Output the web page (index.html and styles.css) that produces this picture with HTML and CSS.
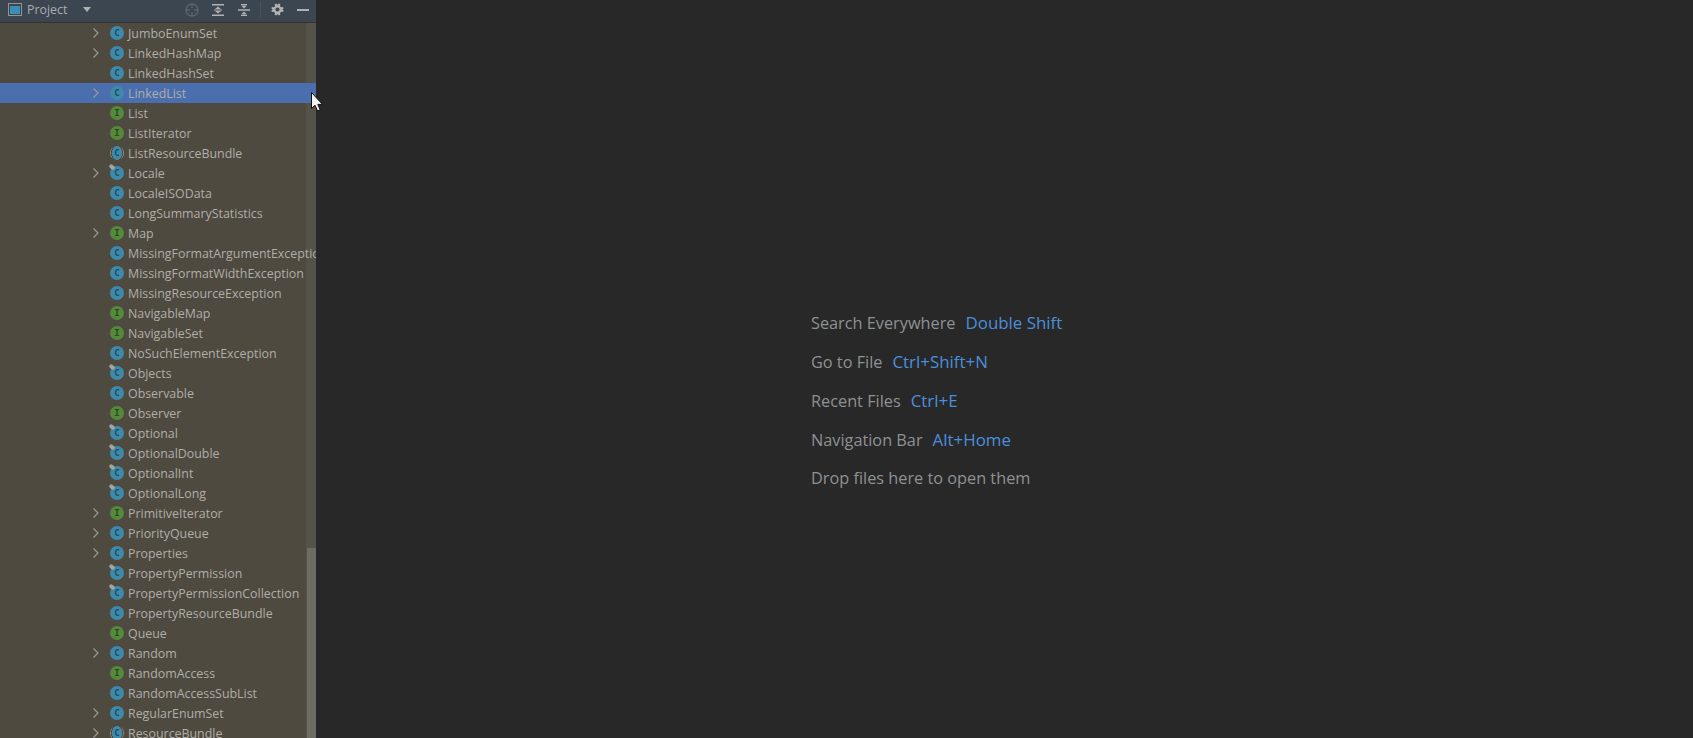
FILE: index.html
```html
<!DOCTYPE html>
<html lang="en">
<head>
<meta charset="utf-8">
<title>Project</title>
<link rel="stylesheet" href="styles.css">
</head>
<body>
<svg class="defs" width="0" height="0" aria-hidden="true">
  <symbol id="chev" viewBox="0 0 12 12"><path d="M3.5 1.5 L8 6 L3.5 10.5" fill="none" stroke="#9a9a96" stroke-width="1.2"/></symbol>
</svg>
<div class="app">
  <aside class="panel">
    <header class="bar">
      <svg class="win" width="14" height="13" viewBox="0 0 14 13"><rect x="0.5" y="0.5" width="13" height="12" fill="none" stroke="#8e9499"/><rect x="2" y="3" width="10" height="8" fill="#3b8fb5"/></svg>
      <span class="title">Project</span>
      <svg class="caret" width="8" height="5" viewBox="0 0 8 5"><path d="M0 0 H8 L4 5 Z" fill="#afb1b3"/></svg>
      <span class="grow"></span>
      <svg class="tool t1" width="14" height="14" viewBox="0 0 14 14"><circle cx="7" cy="7" r="6" fill="none" stroke="#5a6269" stroke-width="1.5"/><path d="M7 0.5 V5 M7 9 V13.5 M0.5 7 H5 M9 7 H13.5" stroke="#5a6269" stroke-width="1.5"/></svg>
      <svg class="tool t2" width="12" height="12" viewBox="0 0 12 12"><path d="M0 0.75 H12 M0 11.25 H12" stroke="#afb1b3" stroke-width="1.5"/><path d="M6 2.5 L9 5 H3 Z M6 9.5 L9 7 H3 Z" fill="#afb1b3"/><path d="M2 6 H10" stroke="#afb1b3"/></svg>
      <svg class="tool t3" width="12" height="12" viewBox="0 0 12 12"><path d="M0 6 H12" stroke="#afb1b3" stroke-width="1.5"/><path d="M6 4.5 L3 1.5 H9 Z M6 7.5 L3 10.5 H9 Z" fill="#afb1b3"/><path d="M3 0.5 H9 M3 11.5 H9" stroke="#afb1b3"/></svg>
      <i class="sep"></i>
      <svg class="tool t4" width="13" height="13" viewBox="0 0 14 14"><path d="M7 2 L8.6 0.6 L10 1.4 L9.7 3.4 L11 4.7 L13 4.4 L13.6 6 L12.2 7 L13.6 8.2 L13 9.7 L11 9.4 L9.7 10.7 L10 12.7 L8.6 13.4 L7 12 L5.4 13.4 L4 12.7 L4.3 10.7 L3 9.4 L1 9.7 L0.4 8.2 L1.8 7 L0.4 6 L1 4.4 L3 4.7 L4.3 3.4 L4 1.4 L5.4 0.6 Z M7 4.8 A2.2 2.2 0 1 0 7 9.2 A2.2 2.2 0 1 0 7 4.8 Z" fill="#afb1b3" fill-rule="evenodd"/></svg>
      <svg class="tool t5" width="12" height="2" viewBox="0 0 12 2"><rect width="12" height="2" fill="#afb1b3"/></svg>
    </header>
    <div class="tree">
      <div class="track"><div class="thumb"></div></div>
      <ul class="rows">
        <li class="row"><svg class="chev"><use href="#chev"/></svg><span class="ico c">C</span><span class="name">JumboEnumSet</span></li>
        <li class="row"><svg class="chev"><use href="#chev"/></svg><span class="ico c">C</span><span class="name">LinkedHashMap</span></li>
        <li class="row"><span class="ico c nochev">C</span><span class="name">LinkedHashSet</span></li>
        <li class="row sel"><svg class="chev"><use href="#chev"/></svg><span class="ico c">C</span><span class="name">LinkedList</span></li>
        <li class="row"><span class="ico i nochev">I</span><span class="name">List</span></li>
        <li class="row"><span class="ico i nochev">I</span><span class="name">ListIterator</span></li>
        <li class="row"><span class="ico c abs nochev">C</span><span class="name">ListResourceBundle</span></li>
        <li class="row"><svg class="chev"><use href="#chev"/></svg><span class="ico c fin">C</span><span class="name">Locale</span></li>
        <li class="row"><span class="ico c nochev">C</span><span class="name">LocaleISOData</span></li>
        <li class="row"><span class="ico c nochev">C</span><span class="name">LongSummaryStatistics</span></li>
        <li class="row"><svg class="chev"><use href="#chev"/></svg><span class="ico i">I</span><span class="name">Map</span></li>
        <li class="row"><span class="ico c nochev">C</span><span class="name">MissingFormatArgumentException</span></li>
        <li class="row"><span class="ico c nochev">C</span><span class="name">MissingFormatWidthException</span></li>
        <li class="row"><span class="ico c nochev">C</span><span class="name">MissingResourceException</span></li>
        <li class="row"><span class="ico i nochev">I</span><span class="name">NavigableMap</span></li>
        <li class="row"><span class="ico i nochev">I</span><span class="name">NavigableSet</span></li>
        <li class="row"><span class="ico c nochev">C</span><span class="name">NoSuchElementException</span></li>
        <li class="row"><span class="ico c fin nochev">C</span><span class="name">Objects</span></li>
        <li class="row"><span class="ico c nochev">C</span><span class="name">Observable</span></li>
        <li class="row"><span class="ico i nochev">I</span><span class="name">Observer</span></li>
        <li class="row"><span class="ico c fin nochev">C</span><span class="name">Optional</span></li>
        <li class="row"><span class="ico c fin nochev">C</span><span class="name">OptionalDouble</span></li>
        <li class="row"><span class="ico c fin nochev">C</span><span class="name">OptionalInt</span></li>
        <li class="row"><span class="ico c fin nochev">C</span><span class="name">OptionalLong</span></li>
        <li class="row"><svg class="chev"><use href="#chev"/></svg><span class="ico i">I</span><span class="name">PrimitiveIterator</span></li>
        <li class="row"><svg class="chev"><use href="#chev"/></svg><span class="ico c">C</span><span class="name">PriorityQueue</span></li>
        <li class="row"><svg class="chev"><use href="#chev"/></svg><span class="ico c">C</span><span class="name">Properties</span></li>
        <li class="row"><span class="ico c fin nochev">C</span><span class="name">PropertyPermission</span></li>
        <li class="row"><span class="ico c fin nochev">C</span><span class="name">PropertyPermissionCollection</span></li>
        <li class="row"><span class="ico c nochev">C</span><span class="name">PropertyResourceBundle</span></li>
        <li class="row"><span class="ico i nochev">I</span><span class="name">Queue</span></li>
        <li class="row"><svg class="chev"><use href="#chev"/></svg><span class="ico c">C</span><span class="name">Random</span></li>
        <li class="row"><span class="ico i nochev">I</span><span class="name">RandomAccess</span></li>
        <li class="row"><span class="ico c nochev">C</span><span class="name">RandomAccessSubList</span></li>
        <li class="row"><svg class="chev"><use href="#chev"/></svg><span class="ico c">C</span><span class="name">RegularEnumSet</span></li>
        <li class="row"><svg class="chev"><use href="#chev"/></svg><span class="ico c abs">C</span><span class="name">ResourceBundle</span></li>
      </ul>
    </div>
  </aside>
  <main class="editor">
    <ul class="hints">
      <li>Search Everywhere<b>Double Shift</b></li>
      <li>Go to File<b>Ctrl+Shift+N</b></li>
      <li>Recent Files<b>Ctrl+E</b></li>
      <li>Navigation Bar<b>Alt+Home</b></li>
      <li>Drop files here to open them</li>
    </ul>
  </main>
</div>
<svg class="cursor" width="13" height="20" viewBox="0 0 13 20"><path d="M0.5 0.5 V16.5 L4 13.2 L6.6 19 L9.2 17.8 L6.8 12.4 L11.5 12.4 Z" fill="#f4f4f4" stroke="#111" stroke-width="1"/></svg>
</body>
</html>
```
FILE: styles.css
```css
* { box-sizing: border-box; }
html, body { margin: 0; height: 100%; overflow: hidden; background: #282828; }
body { font-family: "Open Sans", "Noto Sans", sans-serif; position: relative; }
.defs { position: absolute; }
.app { display: flex; height: 738px; }
.panel { width: 316px; flex: none; display: flex; flex-direction: column; background: #4e4a40; }
.bar { height: 23px; flex: none; display: flex; align-items: center; background: #3c4650; border-bottom: 1px solid #323232; padding: 0 7px 3px 8px; }
.title { margin-left: 5px; font-size: 12.4px; color: #a9adb0; }
.caret { margin-left: 16px; }
.grow { flex: 1; }
.tool { flex: none; display: block; }
.t2 { margin-left: 13px; }
.t3 { margin-left: 14px; }
.sep { width: 1px; height: 16px; background: #4a535b; margin-left: 10px; }
.t4 { margin-left: 10px; }
.t5 { margin-left: 13px; }
.tree { flex: 1; min-height: 0; position: relative; overflow: hidden; }
.rows { list-style: none; margin: 0; padding: 0; position: relative; }
.row { height: 20px; display: flex; align-items: center; padding-left: 90px; font-size: 12.4px; color: #b0aea8; white-space: nowrap; }
.row.sel { background: #4b6eaf; }
.chev { width: 12px; height: 12px; flex: none; margin-right: 8px; }
.nochev { margin-left: 20px; }
.name { margin-left: 4px; }
.ico { width: 14px; height: 14px; border-radius: 50%; flex: none; display: flex; align-items: center; justify-content: center; font: 700 9px "DejaVu Sans Mono", monospace; position: relative; }
.ico.c { background: #3f8aab; color: #1f4a5e; }
.ico.i { background: #558a3c; color: #2a4a1c; }
.ico.abs { background: radial-gradient(ellipse 5px 7px at center, #3f8aab 100%, #4e4a40 100%, #4e4a40 118%, #8f8f8a 118%); }
.ico.fin::before { content: ""; position: absolute; left: -1px; top: -1px; width: 6px; height: 4px; background: #a5a5a0; border-radius: 2px; transform: rotate(35deg); }
.track { position: absolute; right: 0; top: 0; bottom: 0; width: 10px; background: #55524a; }
.thumb { position: absolute; right: 0; bottom: 0; width: 9px; height: 190px; background: #6e6b63; }
.editor { flex: 1; min-width: 0; background: #282828; padding: 303px 0 0 495px; }
.hints { list-style: none; margin: 0; padding: 0; font-size: 16.3px; color: #8f9193; }
.hints li { height: 39px; line-height: 39px; white-space: nowrap; }
.hints b { font-weight: 400; font-size: 16.9px; color: #4b8fdc; margin-left: 10px; }
.cursor { position: absolute; left: 311px; top: 92px; }
```
